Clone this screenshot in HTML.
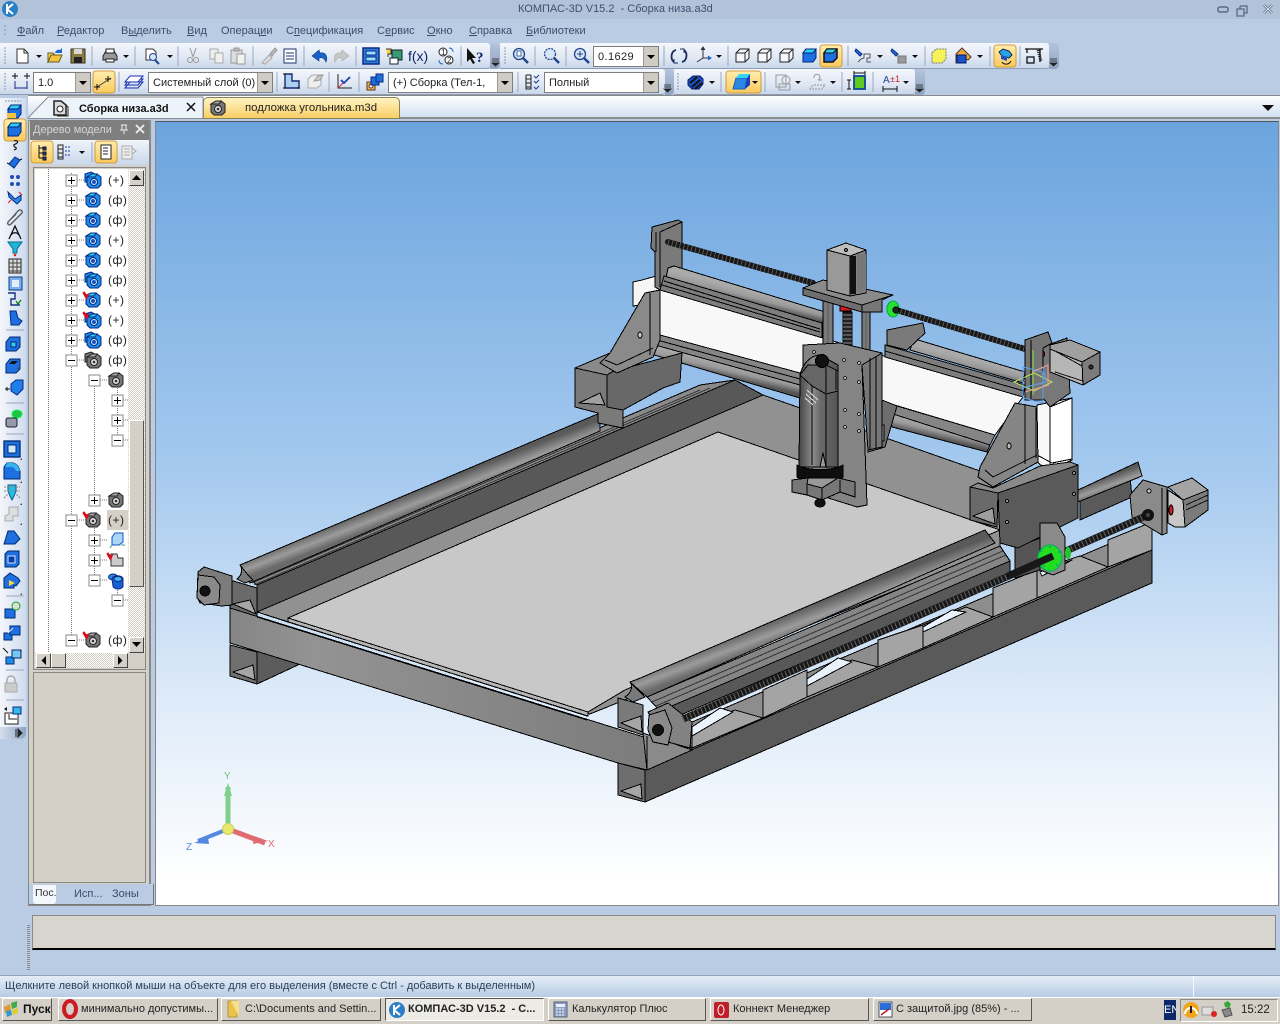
<!DOCTYPE html>
<html><head><meta charset="utf-8"><title>КОМПАС-3D</title>
<style>
html,body{margin:0;padding:0;width:1280px;height:1024px;overflow:hidden;background:#b9cce4;font-family:"Liberation Sans",sans-serif;font-size:11px;color:#222}
div{position:absolute;box-sizing:border-box}
.t{white-space:nowrap;line-height:14px}
.m{top:24px;color:#3d4c6b}
.tb{background:linear-gradient(#f4f7fc,#dfe8f4 60%,#c9d7ea);border-bottom:1px solid #8e9db5;border-radius:0 3px 3px 0}
.h{background:linear-gradient(#b4c4dc,#8fa3c2);border-radius:0 4px 4px 0}
.inp{background:#fff;border:1px solid #7f7f7f;height:21px;line-height:20px;padding-left:4px;white-space:nowrap;font-size:11px}
.dd{position:absolute;right:0;top:0;width:14px;height:19px;background:#cfcbc3;border-left:1px solid #999}
.dd:after{content:"";position:absolute;left:3px;top:8px;border:4px solid transparent;border-top:4px solid #000;border-bottom:0}
.tr{font-size:12px;left:108px;letter-spacing:.5px}
.tk{top:998px;height:23px;background:#d4d0c8;border:1px solid;border-color:#fff #555 #555 #fff;font-size:11px;line-height:21px;white-space:nowrap;overflow:hidden}
</style></head><body>

<!-- title -->
<div style="left:0;top:0;width:1280px;height:19px;background:#b1c2d9"></div>
<div class="t" style="left:518px;top:2px;font-size:11px;color:#3f5070">КОМПАС-3D V15.2&nbsp; - Сборка низа.a3d</div>

<!-- menu -->
<div class="t m" style="left:17px"><u>Ф</u>айл</div>
<div class="t m" style="left:57px"><u>Р</u>едактор</div>
<div class="t m" style="left:121px">В<u>ы</u>делить</div>
<div class="t m" style="left:187px"><u>В</u>ид</div>
<div class="t m" style="left:221px">Операц<u>и</u>и</div>
<div class="t m" style="left:286px">С<u>п</u>ецификация</div>
<div class="t m" style="left:377px">С<u>е</u>рвис</div>
<div class="t m" style="left:427px"><u>О</u>кно</div>
<div class="t m" style="left:469px"><u>С</u>правка</div>
<div class="t m" style="left:526px"><u>Б</u>иблиотеки</div>

<!-- toolbars -->
<div class="tb" style="left:0;top:43px;width:490px;height:26px"></div>
<div class="h" style="left:490px;top:43px;width:10px;height:26px"></div>
<div class="tb" style="left:500px;top:43px;width:549px;height:26px"></div>
<div class="h" style="left:1049px;top:43px;width:10px;height:26px"></div>
<div class="tb" style="left:0;top:69px;width:665px;height:26px"></div>
<div class="h" style="left:665px;top:69px;width:9px;height:26px"></div>
<div class="tb" style="left:674px;top:69px;width:241px;height:26px"></div>
<div class="h" style="left:915px;top:69px;width:10px;height:26px"></div>

<div class="inp" style="left:593px;top:46px;width:66px;letter-spacing:.4px">0.1629<span class="dd"></span></div>
<div class="inp" style="left:33px;top:72px;width:58px">1.0<span class="dd"></span></div>
<div class="inp" style="left:148px;top:72px;width:125px">Системный слой (0)<span class="dd"></span></div>
<div class="inp" style="left:388px;top:72px;width:125px;overflow:hidden">(+) Сборка (Тел-1,<span class="dd"></span></div>
<div class="inp" style="left:544px;top:72px;width:115px">Полный<span class="dd"></span></div>

<!-- tabs -->
<div style="left:28px;top:95px;width:1252px;height:24px;background:linear-gradient(#fff,#d3e0f1);border-top:1px solid #8a8a8a;border-bottom:2px solid #8c8c8c"></div>
<div style="left:203px;top:97px;width:197px;height:22px;background:linear-gradient(#fff3c4,#f9cf65);border:1px solid #8b8158;border-radius:5px 5px 0 0"></div>
<div class="t" style="left:245px;top:101px;font-size:11.4px;color:#222">подложка угольника.m3d</div>

<!-- left panel -->
<div style="left:0;top:98px;width:26px;height:640px;background:linear-gradient(90deg,#f3f6fb,#cfdcef);border-radius:0 0 6px 0"></div>
<div style="left:0;top:727px;width:26px;height:12px;background:linear-gradient(90deg,#d6dfee,#8ea3c4);border-radius:0 0 6px 0"></div>

<div style="left:28px;top:120px;width:123px;height:786px;background:#d4d0c8;border:1px solid #888;border-right:2px solid #888"></div>
<div style="left:30px;top:120px;width:119px;height:20px;background:#7f7f7f"></div>
<div class="t" style="left:33px;top:123px;color:#d6d6d6;font-size:11px">Дерево модели</div>
<div style="left:30px;top:140px;width:119px;height:25px;background:linear-gradient(#f0f4fa,#c9d7ea)"></div>
<div style="left:33px;top:167px;width:113px;height:503px;background:#d4d0c8;border:1px solid #888"></div>
<div style="left:35px;top:169px;width:93px;height:484px;background:#fff"></div>
<div style="left:128px;top:169px;width:17px;height:484px;background:repeating-conic-gradient(#fff 0 25%,#d0ccc4 0 50%) 0 0/2px 2px"></div>
<div style="left:129px;top:420px;width:15px;height:167px;background:#d4d0c8;border:1px solid;border-color:#fff #555 #555 #fff"></div>
<div style="left:35px;top:653px;width:93px;height:15px;background:repeating-conic-gradient(#fff 0 25%,#d0ccc4 0 50%) 0 0/2px 2px"></div>
<div style="left:129px;top:170px;width:15px;height:16px;background:#d4d0c8;border:1px solid;border-color:#fff #444 #444 #fff"></div>
<div style="left:129px;top:637px;width:15px;height:16px;background:#d4d0c8;border:1px solid;border-color:#fff #444 #444 #fff"></div>
<div style="left:36px;top:653px;width:15px;height:15px;background:#d4d0c8;border:1px solid;border-color:#fff #444 #444 #fff"></div>
<div style="left:51px;top:653px;width:15px;height:15px;background:#d4d0c8;border:1px solid;border-color:#fff #444 #444 #fff"></div>
<div style="left:113px;top:653px;width:15px;height:15px;background:#d4d0c8;border:1px solid;border-color:#fff #444 #444 #fff"></div>
<div style="left:33px;top:672px;width:113px;height:211px;background:#d4d0c8;border:1px solid #888"></div>
<div style="left:29px;top:884px;width:125px;height:21px;background:#b9cce4;border-right:1px solid #777;border-bottom:1px solid #777"></div>
<div class="t" style="left:33px;top:885px;width:23px;height:19px;background:#f4f7fc;border-radius:0 0 3px 3px;padding:1px 0 0 2px;font-size:10.5px;color:#333;overflow:hidden">Пос...</div>
<div class="t" style="left:74px;top:887px;color:#3d4c6b">Исп...</div>
<div class="t" style="left:112px;top:887px;color:#3d4c6b">Зоны</div>

<div style="left:107px;top:510px;width:21px;height:20px;background:#d4d0c8"></div>
<div class="t tr" style="top:173px">(+)</div>
<div class="t tr" style="top:193px">(ф)</div>
<div class="t tr" style="top:213px">(ф)</div>
<div class="t tr" style="top:233px">(+)</div>
<div class="t tr" style="top:253px">(ф)</div>
<div class="t tr" style="top:273px">(ф)</div>
<div class="t tr" style="top:293px">(+)</div>
<div class="t tr" style="top:313px">(+)</div>
<div class="t tr" style="top:333px">(ф)</div>
<div class="t tr" style="top:353px">(ф)</div>
<div class="t tr" style="top:513px">(+)</div>
<div class="t tr" style="top:633px">(ф)</div>

<!-- viewport -->
<div style="left:155px;top:121px;width:1124px;height:785px;background:linear-gradient(#6ba4de 0%,#a6caef 45%,#dbe9f8 72%,#fff 97%);border:1px solid #888;border-top:1px solid #555"></div>

<!-- bottom panels -->
<div style="left:32px;top:915px;width:1244px;height:35px;background:#d8d5ce;border:1px solid #8a8a8a;border-bottom:2px solid #000"></div>
<div style="left:27px;top:925px;width:3px;height:45px;background:repeating-linear-gradient(#8a8a8a 0 1px,transparent 1px 2px)"></div>
<div style="left:0;top:975px;width:1280px;height:22px;background:linear-gradient(#e4edf7,#b9cce4);border-top:1px solid #8fa3bf"></div>
<div style="left:1193px;top:976px;width:1px;height:21px;background:#f5f8fc"></div>
<div class="t" style="left:5px;top:979px;font-size:11px;color:#2f3c57">Щелкните левой кнопкой мыши на объекте для его выделения (вместе с Ctrl - добавить к выделенным)</div>

<!-- taskbar -->
<div style="left:0;top:997px;width:1280px;height:27px;background:#d4d0c8;border-top:1px solid #fff"></div>
<div class="tk" style="left:2px;width:50px;padding-left:20px;font-weight:bold;font-size:12px;color:#111">Пуск</div>
<div class="tk" style="left:58px;width:160px;padding-left:22px">минимально допустимы...</div>
<div class="tk" style="left:221px;width:160px;padding-left:23px">C:\Documents and Settin...</div>
<div class="tk" style="left:385px;width:159px;padding-left:22px;font-weight:bold;background:#edebe6;border-color:#555 #fff #fff #555">КОМПАС-3D V15.2&nbsp; - С...</div>
<div class="tk" style="left:548px;width:158px;padding-left:23px">Калькулятор Плюс</div>
<div class="tk" style="left:710px;width:159px;padding-left:22px">Коннект Менеджер</div>
<div class="tk" style="left:873px;width:159px;padding-left:22px">С защитой.jpg (85%) - ...</div>
<div style="left:1180px;top:999px;width:98px;height:23px;border:1px solid;border-color:#888 #fff #fff #888"></div>
<div style="left:1164px;top:1000px;width:12px;height:20px;background:#0c2a6b;color:#fff;font-size:11px;line-height:20px;overflow:hidden">EN</div>
<div class="t" style="left:1241px;top:1003px;font-size:11.5px;color:#222">15:22</div>

<!-- ALL ICONS + MODEL -->
<svg width="1280" height="1024" viewBox="0 0 1280 1024" style="position:absolute;left:0;top:0" xmlns="http://www.w3.org/2000/svg">
<defs>
<linearGradient id="rr" gradientUnits="userSpaceOnUse" x1="800" y1="609" x2="808" y2="630"><stop offset="0" stop-color="#5a5a5a"/><stop offset=".6" stop-color="#9c9c9c"/><stop offset="1" stop-color="#6a6a6a"/></linearGradient>
<linearGradient id="rl" gradientUnits="userSpaceOnUse" x1="400" y1="497" x2="407" y2="515"><stop offset="0" stop-color="#5a5a5a"/><stop offset=".6" stop-color="#9c9c9c"/><stop offset="1" stop-color="#6a6a6a"/></linearGradient>
<linearGradient id="rf" gradientUnits="userSpaceOnUse" x1="1110" y1="476" x2="1115" y2="490"><stop offset="0" stop-color="#5a5a5a"/><stop offset=".6" stop-color="#9c9c9c"/><stop offset="1" stop-color="#6a6a6a"/></linearGradient>
<linearGradient id="r1" gradientUnits="userSpaceOnUse" x1="750" y1="291" x2="747" y2="303"><stop offset="0" stop-color="#aaa"/><stop offset=".5" stop-color="#999"/><stop offset="1" stop-color="#555"/></linearGradient>
<linearGradient id="r2" gradientUnits="userSpaceOnUse" x1="970" y1="359" x2="967" y2="371"><stop offset="0" stop-color="#aaa"/><stop offset=".5" stop-color="#999"/><stop offset="1" stop-color="#555"/></linearGradient>
<linearGradient id="r3" gradientUnits="userSpaceOnUse" x1="725" y1="363" x2="722" y2="376"><stop offset="0" stop-color="#aaa"/><stop offset=".5" stop-color="#999"/><stop offset="1" stop-color="#555"/></linearGradient>
<linearGradient id="r4" gradientUnits="userSpaceOnUse" x1="940" y1="425" x2="937" y2="438"><stop offset="0" stop-color="#aaa"/><stop offset=".5" stop-color="#999"/><stop offset="1" stop-color="#555"/></linearGradient>
<linearGradient id="beam" x1="0" y1="0" x2="1" y2="0"><stop offset="0" stop-color="#858585"/><stop offset=".2" stop-color="#939393"/><stop offset="1" stop-color="#7c7c7c"/></linearGradient>
<linearGradient id="sel" x1="0" y1="0" x2="0" y2="1"><stop offset="0" stop-color="#ffeeb0"/><stop offset="1" stop-color="#fbc95c"/></linearGradient>
<linearGradient id="sp" x1="0" y1="0" x2="1" y2="0"><stop offset="0" stop-color="#444"/><stop offset=".35" stop-color="#8c8c8c"/><stop offset=".55" stop-color="#6a6a6a"/><stop offset="1" stop-color="#555"/></linearGradient>

<g id="ar"><path d="M-3 -1h6l-3 3z" fill="#111"/></g>
<g id="sl"><rect x="-11" y="-11" width="22" height="22" rx="3" fill="url(#sel)" stroke="#d19a3a"/></g>
<g id="pl"><rect x="-5.500" y="-5.500" width="11" height="11" fill="#fff" stroke="#8a8a8a"/><path d="M-3.500 0h7M0 -3.500v7" stroke="#000" fill="none"/></g>
<g id="mi"><rect x="-5.500" y="-5.500" width="11" height="11" fill="#fff" stroke="#8a8a8a"/><path d="M-3.500 0h7" stroke="#000" fill="none"/></g>

<g id="pb"><path d="M-7 -4l5 -3 5 0 4 3v8l-3 3h-8l-3 -3z" fill="#1b8ce8" stroke="#06257f"/><path d="M-7 -4l5 -3 5 0 -2 3z" fill="#27d3f0" stroke="#06257f"/><circle cx="0" cy="1" r="3.500" fill="#d5efff" stroke="#06257f"/><circle cx="0" cy="1" r="2" fill="#1a4fc0"/></g>
<g id="pb2"><path d="M-8 -6l6 -2 4 2v8h-10z" fill="#1b8ce8" stroke="#06257f"/><use href="#pb" x="1" y="1"/></g>
<g id="pg"><path d="M-7 -4l5 -3 5 0 4 3v8l-3 3h-8l-3 -3z" fill="#777" stroke="#222"/><path d="M-7 -4l5 -3 5 0 -2 3z" fill="#aaa" stroke="#222"/><circle cx="0" cy="1" r="3.500" fill="#ddd" stroke="#222"/><circle cx="0" cy="1" r="1.300" fill="#333"/></g>
<g id="pg2"><path d="M-8 -6l6 -2 4 2v8h-10z" fill="#777" stroke="#222"/><use href="#pg" x="1" y="1"/></g>
<path id="chk" d="M-7 -8l2.500 3 2 -1 -2 5 -3.500 -6z" fill="#d40f1f" stroke="#d40f1f"/>

<g id="box"><path d="M-7 -3l3 -4h10v9l-3 4h-10z" fill="#1e6fe0" stroke="#00247a"/><path d="M-7 -3l3 -4h10l-3 4z" fill="#31d0f2" stroke="#00247a"/></g>
<g id="wire"><path d="M-7 -3l4 -4h9v9l-4 4h-9zM-7 -3h9v9M2 -3l4 -4" fill="#f4f7fc" stroke="#222"/></g>
</defs>

<!-- Logo -->
<circle cx="10" cy="9" r="8" fill="#2a7fc4"/><path d="M7 4v10M7 9l6 -5M7 9l6 5" stroke="#fff" stroke-width="2" fill="none"/>
<!-- window buttons -->
<rect x="1218" y="7" width="10" height="5" rx="2" fill="none" stroke="#5a6a86" stroke-width="1.500"/>
<path d="M1240 6h7v7h-3M1240 6v3M1240 9h4v7h-7v-7z" fill="none" stroke="#5a6a86" stroke-width="1.300"/>
<path d="M1264 5l8 8M1272 5l-8 8" stroke="#5a6a86" stroke-width="2.500"/><path d="M1264 5l8 8M1272 5l-8 8" stroke="#dfe7f1" stroke-width="1"/>
<!-- menu handle -->
<path d="M5 25v12" stroke="#8898b0" stroke-dasharray="2 2"/>

<!-- toolbar row 1 -->
<g stroke="#8a9ab2" stroke-dasharray="2 1"><path d="M5 47v18M5 73v18"/></g>
<g stroke="#9aa8bc"><path d="M92 46v20M135 46v20M178 46v20M253 46v20M304 46v20M356 46v20M461 46v20M535 46v20M566 46v20M664 46v20M728 46v20M848 46v20M925 46v20M990 46v20M1020 46v20"/>
<path d="M119 72v20M277 72v20M329 72v20M359 72v20M518 72v20M721 72v20M765 72v20M842 72v20M873 72v20"/></g>
<path d="M505 47v18" stroke="#8a9ab2" stroke-dasharray="2 1"/><path d="M678 73v18" stroke="#8a9ab2" stroke-dasharray="2 1"/>

<g transform="translate(22,56)"><path d="M-5 -7h7l4 4v10h-11z" fill="#fff" stroke="#333"/><path d="M2 -7v4h4" fill="none" stroke="#333"/></g>
<use href="#ar" x="39" y="56"/>
<g transform="translate(55,56)"><path d="M-7 6v-9h5l2 2h5v2h-9z" fill="#f6d25c" stroke="#6b5a1e"/><path d="M-7 6l3 -7h11l-3 7z" fill="#f2c440" stroke="#6b5a1e"/><path d="M0 -3c1 -3 3 -4 5 -3l2 -2v5h-4" fill="#1c67d4"/></g>
<g transform="translate(78,56)"><rect x="-7" y="-7" width="14" height="14" fill="#8a7a3c" stroke="#332"/><rect x="-4" y="-7" width="8" height="5" fill="#d8d8d8"/><rect x="-4" y="1" width="8" height="6" fill="#222"/></g>
<g transform="translate(110,56)"><path d="M-7 0l3 -5h8l3 5v4h-14z" fill="#999" stroke="#222"/><rect x="-4" y="-7" width="8" height="4" fill="#fff" stroke="#222"/><rect x="-4" y="3" width="8" height="3" fill="#fff" stroke="#222"/></g>
<use href="#ar" x="126" y="56"/>
<g transform="translate(152,56)"><path d="M-6 -7h7l3 3v8h-10z" fill="#fff" stroke="#333"/><circle cx="1" cy="1" r="3.500" fill="#d4e4f7" stroke="#22449a"/><path d="M3 4l4 4" stroke="#22449a" stroke-width="2"/></g>
<use href="#ar" x="170" y="56"/>
<g transform="translate(193,56)" fill="none" stroke="#999"><path d="M-3 -8l3 9M3 -8l-3 9"/><circle cx="-3" cy="4" r="2.500"/><circle cx="3" cy="4" r="2.500"/></g>
<g transform="translate(217,56)" fill="#efefef" stroke="#aaa"><path d="M-7 -7h8v10h-8z"/><path d="M-2 -3h8v10h-8z"/></g>
<g transform="translate(238,56)" fill="#ddd" stroke="#999"><rect x="-7" y="-6" width="11" height="13"/><rect x="-1" y="-2" width="8" height="10" fill="#f2f2f2"/><rect x="-4" y="-8" width="5" height="3" fill="#bbb"/></g>
<g transform="translate(269,56)"><path d="M-7 7l7 -8 3 3 -7 6z" fill="#ddd" stroke="#aaa"/><path d="M1 -2l5 -6 2 2 -5 6z" fill="#bbb" stroke="#999"/></g>
<g transform="translate(290,56)"><rect x="-6" y="-7" width="12" height="14" fill="#fff" stroke="#1c2f6e"/><path d="M-4 -3h8M-4 0h8M-4 3h8" stroke="#1c2f6e"/></g>
<path d="M326 62c2 -5 0 -10 -6 -9l-1 -3 -7 6 7 5v-3c3 -1 5 0 7 4z" fill="#1a62c6" stroke="#0b3a86" stroke-width=".6" transform="translate(0,0)"/>
<path d="M335 62c-2 -5 0 -10 6 -9l1 -3 7 6 -7 5v-3c-3 -1 -5 0 -7 4z" fill="#c8c8c8" stroke="#aaa" stroke-width=".6"/>
<g transform="translate(371,56)"><rect x="-8" y="-8" width="16" height="16" fill="#2a7fe0" stroke="#0a2a80" stroke-width="1.500"/><rect x="-5" y="-5" width="10" height="4" fill="#9fdcff" stroke="#0a2a80"/><rect x="-5" y="1" width="10" height="4" fill="#9fdcff" stroke="#0a2a80"/></g>
<g transform="translate(394,56)"><rect x="-2" y="-6" width="10" height="10" fill="#3a9a70" stroke="#123"/><rect x="-4" y="2" width="8" height="6" fill="#fff" stroke="#123"/><path d="M-8 -7h5v5h-3v3" fill="#f7d73c" stroke="#333"/></g>
<text x="408" y="61" font-family="Liberation Sans" font-size="14" fill="#11246b">f(x)</text>
<g transform="translate(446,56)" font-family="Liberation Sans" font-size="8" fill="#222"><circle cx="-3" cy="-4" r="4" fill="#fff" stroke="#222"/><circle cx="3" cy="4" r="4" fill="#fff" stroke="#222"/><text x="-5" y="-1">1</text><text x="1" y="7">2</text><path d="M3 -8c3 0 4 2 4 4M-3 8c-3 0 -4 -2 -4 -4" stroke="#1c67d4" fill="none"/></g>
<g transform="translate(472,56)"><path d="M-5 -8v14l3 -3 3 5 2 -1 -3 -5h4z" fill="#111"/></g>
<text x="476" y="62" font-family="Liberation Serif" font-weight="bold" font-size="15" fill="#11246b">?</text>
<path d="M492 59h7M492 61h7M492 63l3.500 3 3.500 -3z" stroke="#222" fill="#222" stroke-width=".8"/>
<path d="M1050 59h7M1050 61h7M1050 63l3.500 3 3.500 -3z" stroke="#222" fill="#222" stroke-width=".8"/>
<path d="M664 85h7M664 87h7M664 89l3.500 3 3.500 -3z" stroke="#222" fill="#222" stroke-width=".8"/>
<path d="M916 85h7M916 87h7M916 89l3.500 3 3.500 -3z" stroke="#222" fill="#222" stroke-width=".8"/>

<g fill="#d6e6f7" stroke="#22448a"><circle cx="519" cy="54" r="5.500" stroke-width="1.300"/><circle cx="550" cy="54" r="5.500" stroke-width="1.300" stroke-dasharray="2 1"/><circle cx="580" cy="54" r="5.500" stroke-width="1.300"/></g>
<g stroke="#22448a" stroke-width="2.500"><path d="M523 58l5 5M554 58l5 5M584 58l5 5"/></g>
<path d="M577 54h6M580 51v6" stroke="#22448a"/><rect x="517" y="51" width="4" height="5" fill="#fff" stroke="#22448a" stroke-width=".8"/>

<g fill="none" stroke="#1a2a5e" stroke-width="1.800"><path d="M676 50c-5 1 -6 9 -2 12M682 62c5 -1 6 -9 2 -12"/><path d="M674 59v4h4M684 53v-4h-4" stroke-width="1"/></g>
<g transform="translate(703,56)" fill="none" stroke="#333"><path d="M0 -8v10l-6 4M0 2h7" /><path d="M-2 -6l2 -3 2 3" fill="#333"/><path d="M5 0l3 2 -3 2" fill="#1c67d4" stroke="#1c67d4"/></g>
<use href="#ar" x="719" y="56"/>
<use href="#wire" x="743" y="56"/><use href="#wire" x="765" y="56"/><use href="#wire" x="787" y="56"/>
<use href="#box" x="810" y="56"/><use href="#sl" x="831" y="56"/><g transform="translate(831,56)"><path d="M-7 -3l3 -4h10v9l-4 4h-9z" fill="#1e6fe0" stroke="#111" stroke-width="1.500"/><path d="M-7 -3l3 -4h10l-4 4z" fill="#31d0f2" stroke="#111"/></g>
<g transform="translate(864,56)"><path d="M-8 -7l6 5 -2 2 -5 -5z" fill="#1e6fe0" stroke="#0a2a80"/><path d="M-3 3l3 -1v-4h6v4h-3v4h4M-6 6l3 -3" fill="none" stroke="#555"/></g><use href="#ar" x="880" y="56"/>
<g transform="translate(900,56)"><path d="M-8 -7l6 5 -2 2 -5 -5z" fill="#1e6fe0" stroke="#0a2a80"/><rect x="-2" y="0" width="8" height="7" fill="#999" stroke="#777"/></g><use href="#ar" x="915" y="56"/>
<g transform="translate(939,56)"><path d="M-7 -3l4 -4h10v10l-4 4h-10z" fill="#f6f25a" stroke="#777" stroke-dasharray="2 1"/></g>
<g transform="translate(963,56)"><path d="M-7 -2l6 -6 6 6 3 3 -3 3 -2 -1v4h-10z" fill="#f1a83a" stroke="#533"/><rect x="-6" y="-1" width="9" height="8" fill="#1a50c8" stroke="#001a66"/></g><use href="#ar" x="980" y="56"/>
<use href="#sl" x="1005" y="56"/><g transform="translate(1005,56)"><path d="M-6 -4l4 -3 6 2 3 4 -3 3 -7 -2z" fill="#29a4ec" stroke="#123"/><path d="M-4 -1l6 2v4l-6 -2z" fill="#1e50c0"/><path d="M-3 6c2 3 7 3 9 -1" fill="none" stroke="#111"/></g>
<g transform="translate(1034,56)" fill="none" stroke="#111" stroke-width="1.300"><path d="M-9 -7h18M-7 -7v4M6 -7v13"/><rect x="-7" y="1" width="7" height="6"/><path d="M4 -6l3 11" stroke-dasharray="1 1" stroke-width="3"/></g>

<!-- toolbar row 2 -->
<g transform="translate(21,82)" fill="none" stroke="#1a2a8a"><path d="M-6 -1v8M6 -1v8M-6 6h12" /><path d="M-9 -6h6M-6 -9v6M3 -6h6M6 -9v6" stroke="#111"/></g>
<use href="#sl" x="104" y="82"/><g transform="translate(104,82)"><path d="M-7 5l14 -9" stroke="#444"/><path d="M-7 2v6M-10 5h6M4 -6v6M1 -3h6" stroke="#111"/></g>
<g transform="translate(134,82)" fill="none" stroke="#1a2fb0"><path d="M-9 3l5 -6h13l-5 6z"/><path d="M-9 6l5 -6h13l-5 6z"/><path d="M-9 0l5 -6h13l-5 6z" fill="#fff"/></g>
<g transform="translate(292,82)"><path d="M-7 -8v14h14v-7h-7v-7z" fill="#a9d0ef" stroke="#1a2a6e" stroke-width="1.400"/><path d="M-9 -8h3M-9 6h3M5 6h3" stroke="#111"/></g>
<g transform="translate(315,82)"><path d="M-7 -3l4 -4h9v10l-4 3h-9z" fill="#eee" stroke="#aaa"/><path d="M-1 -1l4 -5 5 -1 -3 5z" fill="#ccc" stroke="#999"/></g>
<g transform="translate(345,82)" fill="none"><path d="M-7 -8v14h14" stroke="#222"/><path d="M-7 6l6 -6" stroke="#d22"/><path d="M-4 -2l3 3 6 -6" stroke="#1c3fb0" stroke-width="1.800"/></g>
<g transform="translate(375,82)"><rect x="-8" y="0" width="8" height="8" fill="#f2b83f" stroke="#533"/><circle cx="-4" cy="4" r="2" fill="#fff" stroke="#533"/><rect x="-4" y="-5" width="8" height="8" fill="#1d70dc" stroke="#0a2a80"/><rect x="1" y="-8" width="7" height="8" fill="#1d70dc" stroke="#0a2a80"/></g>
<g transform="translate(532,82)" fill="none" stroke="#222"><path d="M-6 -7h5M-6 -3h5M-6 1h5M-6 5h5M-6 -7v14h5v-14"/><path d="M2 -6l2 2 3 -3M2 -1l2 2 3 -3M2 5l2 2 3 -3" stroke="#1a3a90"/></g>
<g transform="translate(695,82)"><path d="M-7 -2l5 -4h7l3 3v5l-4 5h-7l-4 -4z" fill="#1b4fc4" stroke="#001a66"/><path d="M-5 1l7 -6M-3 5l8 -7M0 7l7 -6" stroke="#111" stroke-width="2"/></g><use href="#ar" x="712" y="82"/>
<rect x="726" y="71" width="35" height="22" rx="3" fill="url(#sel)" stroke="#d19a3a"/>
<g transform="translate(740,82)"><path d="M-7 7l3 -11h11l-2 11z" fill="#2a86e0" stroke="#1a60c4"/><path d="M-4 -4l3 -4h11l-3 4z" fill="#37d2f0"/><path d="M7 -4l3 -4v11l-5 4z" fill="#1a3fc0"/></g><use href="#ar" x="755" y="82"/>
<g transform="translate(783,82)" fill="none" stroke="#9a9a9a"><rect x="-7" y="-7" width="10" height="12"/><circle cx="3" cy="-2" r="4"/><rect x="-4" y="2" width="11" height="6"/></g><use href="#ar" x="798" y="82"/>
<g transform="translate(817,82)" fill="none" stroke="#9a9a9a"><path d="M-7 7l3 -4h12l-3 4z" stroke-dasharray="2 1"/><path d="M-3 -4a3 3 0 1 1 4 2h4"/></g><use href="#ar" x="833" y="82"/>
<g transform="translate(858,82)"><rect x="-4" y="-6" width="11" height="13" fill="#5ec91e" stroke="#11469a" stroke-width="1.800"/><path d="M-9 -2v9M-11 -2h4M-11 7h4M-4 -9h11M-4 -11v4M7 -11v4" stroke="#111" fill="none"/></g>
<g transform="translate(891,82)"><path d="M-8 7h14M-8 4v6M6 4v6" stroke="#111" fill="none"/><text x="-8" y="1" font-family="Liberation Sans" font-size="10" fill="#22449a">A</text><text x="-1" y="0" font-family="Liberation Sans" font-size="9" fill="#c22">±1</text></g><use href="#ar" x="906" y="82"/>

<!-- tab icons -->
<path d="M28 118L48 97H203V118" fill="#edf3fa" stroke="#8a8a8a"/>
<g transform="translate(60,108)"><path d="M-6 -7h7l5 4v10h-12z" fill="#ddd" stroke="#222" stroke-width="1.500"/><circle cx="0" cy="1" r="3" fill="#fff" stroke="#222"/><path d="M6 -3l2 2v9h-11" fill="none" stroke="#222"/></g>
<path d="M187 103l8 8M195 103l-8 8" stroke="#111" stroke-width="1.500"/>
<text x="79" y="112" font-family="Liberation Sans" font-weight="bold" font-size="11" fill="#111">Сборка низа.a3d</text>
<use href="#pg" x="218" y="108"/>
<path d="M1262 105h12l-6 6z" fill="#111"/>

<!-- panel title + tools -->
<g transform="translate(124,129)" stroke="#eee" fill="none"><path d="M-3 -4h6M-2 -4v5M2 -4v5M-4 1h8M0 1v4"/></g>
<path d="M136 125l8 8M144 125l-8 8" stroke="#eee" stroke-width="1.800"/>
<use href="#sl" x="42" y="152"/><g transform="translate(42,152)" fill="none" stroke="#111"><path d="M-3 -7v13M-3 -4h5M-3 1h5M-3 6h5"/><rect x="1" y="-5" width="3" height="3" fill="#1c3fb0"/><rect x="1" y="0" width="3" height="3" fill="#1c3fb0"/><rect x="1" y="5" width="3" height="3" fill="#1c3fb0"/></g>
<g transform="translate(65,152)" fill="none" stroke="#222"><path d="M-7 -7h5v14h-5zM-7 -3h5M-7 1h5M-7 5h5"/><path d="M0 -5h6M0 -1h6M0 3h6" stroke="#1c3fb0" stroke-dasharray="2 1"/></g><use href="#ar" x="82" y="152"/>
<path d="M92 142v20" stroke="#9aa8bc"/>
<use href="#sl" x="106" y="152"/><g transform="translate(106,152)"><rect x="-5" y="-7" width="10" height="14" fill="#fff" stroke="#222"/><path d="M-3 -4h5M-3 -1h5M-3 2h5" stroke="#222"/></g>
<g transform="translate(129,152)" stroke="#aaa" fill="#eee"><rect x="-7" y="-6" width="10" height="13"/><path d="M-5 -3h6M-5 0h6M-5 3h6" fill="none"/><path d="M3 -4l4 3 -4 3z"/></g>

<!-- tree lines -->
<g stroke="#777" stroke-dasharray="1 1" fill="none">
<path d="M48.500 169v484M71.500 173v347M71.500 520v120M94.500 386v114M94.500 526v55M117.500 586v14M117.500 386v55"/>
<path d="M77 180h8M77 200h8M77 220h8M77 240h8M77 260h8M77 280h8M77 300h8M77 320h8M77 340h8M77 360h8M100 380h8M123 400h5M123 420h5M123 440h5M100 500h8M77 520h8M100 540h8M100 560h8M100 580h8M123 600h5M77 640h8"/>
</g>
<g>
<use href="#pl" x="71.500" y="180.500"/><use href="#pl" x="71.500" y="200.500"/><use href="#pl" x="71.500" y="220.500"/><use href="#pl" x="71.500" y="240.500"/><use href="#pl" x="71.500" y="260.500"/><use href="#pl" x="71.500" y="280.500"/><use href="#pl" x="71.500" y="300.500"/><use href="#pl" x="71.500" y="320.500"/><use href="#pl" x="71.500" y="340.500"/><use href="#mi" x="71.500" y="360.500"/>
<use href="#mi" x="94.500" y="380.500"/><use href="#pl" x="117.500" y="400.500"/><use href="#pl" x="117.500" y="420.500"/><use href="#mi" x="117.500" y="440.500"/>
<use href="#pl" x="94.500" y="500.500"/><use href="#mi" x="71.500" y="520.500"/><use href="#pl" x="94.500" y="540.500"/><use href="#pl" x="94.500" y="560.500"/><use href="#mi" x="94.500" y="580.500"/><use href="#mi" x="117.500" y="600.500"/><use href="#mi" x="71.500" y="640.500"/>
<use href="#pb2" x="93" y="180"/><use href="#pb" x="93" y="200"/><use href="#pb" x="93" y="220"/><use href="#pb" x="93" y="240"/><use href="#pb" x="93" y="260"/><use href="#pb2" x="93" y="280"/>
<use href="#pb" x="93" y="300"/><use href="#chk" x="91" y="300"/><use href="#pb2" x="93" y="320"/><use href="#chk" x="91" y="320"/><use href="#pb2" x="93" y="340"/><use href="#pg2" x="93" y="360"/><use href="#pg" x="116" y="380"/><use href="#pg" x="116" y="500"/>
<use href="#pg" x="93" y="520"/><use href="#chk" x="91" y="520"/><use href="#pg" x="93" y="640"/><use href="#chk" x="91" y="640"/>
<g transform="translate(117,540)"><path d="M-5 -3l3 -4h8v9l-4 3h-7z" fill="#a9d6f5" stroke="#1a4fc4"/><path d="M-5 5l-2 3M4 5h4" stroke="#2a9" /></g>
<g transform="translate(116,560)"><path d="M-5 -6h6l1 4h5v8h-12z" fill="#ccc" stroke="#333"/><use href="#chk" x="-1" y="1"/></g>
<g transform="translate(116,580)"><ellipse cx="-3" cy="-3" rx="4.500" ry="3" fill="#2a8ce8" stroke="#0a2a80"/><path d="M-4 -1a5 3 0 0 1 11 0v7a5 3 0 0 1 -10 0z" fill="#1b60d0" stroke="#0a2a80"/><ellipse cx="2" cy="-1" rx="4" ry="2.500" fill="#3cb2f0" stroke="#0a2a80"/></g>
</g>
<path d="M132 180h9l-4.500 -5z" fill="#000"/><path d="M132 642h9l-4.500 5z" fill="#000"/><path d="M46 656v9l-4.500 -4.500z" fill="#000"/><path d="M118 656v9l4.500 -4.500z" fill="#000"/>

<!-- left vertical toolbar -->
<path d="M5 101h16" stroke="#8a9ab2" stroke-dasharray="2 1"/>
<use href="#box" x="15" y="112"/><rect x="7" y="113" width="9" height="5" fill="#f2c23f"/>
<use href="#sl" x="15" y="130"/><use href="#box" x="15" y="130"/>
<path d="M14 141c2 -1 5 0 3 2s-4 1 -3 3 3 1 2 3l-2 1" fill="none" stroke="#111" stroke-width="1.200"/>
<g transform="translate(15,163)"><path d="M-6 1l6 -7 5 3 -6 8z" fill="#1e6fe0" stroke="#0a2a80"/><path d="M-6 1l-2 -1M5 -3l2 -1" stroke="#111"/></g>
<g fill="#1e4fb0"><circle cx="12" cy="177" r="2"/><circle cx="18" cy="177" r="2"/><circle cx="12" cy="184" r="2"/><circle cx="18" cy="184" r="2"/></g>
<g transform="translate(15,198)"><path d="M-7 -6l7 7 6 -4v5l-4 4 -8 -7z" fill="#2a8ae8" stroke="#0a2a80"/><path d="M-4 2l-3 3M4 -6l3 3" stroke="#d22"/></g>
<path d="M10 220l8 -9c3 -3 6 1 3 3l-10 10c-2 2 -4 0 -3 -2l8 -8" fill="none" stroke="#555" stroke-width="1.300"/>
<path d="M9 239l6 -13 6 13M11 235c2 -3 6 -3 8 0" fill="none" stroke="#111" stroke-width="1.300"/>
<g transform="translate(15,248)"><path d="M-7 -6h14l-5 7v4h-4v-4z" fill="#1fb6d8" stroke="#0a6a90"/><circle cx="0" cy="7" r="1.300" fill="#d22"/></g>
<g transform="translate(15,266)"><rect x="-6" y="-7" width="12" height="14" fill="#ddd" stroke="#222"/><path d="M-6 -3h12M-6 1h12M-6 5h12M-2 -7v14M2 -7v14" stroke="#444"/></g>
<rect x="9" y="277" width="13" height="13" fill="#7bb0ee" stroke="#123a80"/><rect x="12" y="280" width="7" height="7" fill="#e2effb"/>
<g transform="translate(15,300)" stroke="#13327e" fill="none" stroke-width="1.400"><path d="M-7 -7h7v6h-4v6h9"/><path d="M1 1l2 3 3 -4" stroke="#1c7f1c"/></g>
<g transform="translate(15,318)"><path d="M-5 -7h6l2 7 4 3 -3 4h-8z" fill="#1e6fe0" stroke="#0a2a80"/></g>
<path d="M6 330h18M6 403h18M6 434h18M6 596h18M6 670h18M6 700h18" stroke="#9aa8bc"/>
<g transform="translate(14,345)"><path d="M-8 -3l4 -5h10v10l-4 4h-10z" fill="#1e6fe0" stroke="#002a6e"/><path d="M-3 -3h5v5h-5z" fill="#34cdf0" stroke="#002a6e"/></g>
<g transform="translate(14,367)"><path d="M-8 -3l4 -5h10v10l-4 4h-10z" fill="#1e6fe0" stroke="#002a6e"/><path d="M-5 -3l3 -3h6l-3 3z" fill="#111"/></g>
<g transform="translate(14,388)"><path d="M-3 -4l5 -4h7v9l-6 6 -6 -4z" fill="#1e7fe8" stroke="#0a2a80"/><path d="M-9 1h5M-7 -1v4" stroke="#111"/></g>
<g transform="translate(14,419)"><ellipse cx="3" cy="-5" rx="5" ry="4" fill="#25c046" stroke="#0f4"/><rect x="-8" y="-1" width="11" height="9" rx="2" fill="#99a" stroke="#123"/></g>
<g transform="translate(12,449)"><rect x="-8" y="-8" width="16" height="16" fill="#1e6fe0" stroke="#002a6e" stroke-width="1.300"/><rect x="-4" y="-4" width="8" height="8" fill="#cfe8fa" stroke="#002a6e"/></g>
<g transform="translate(12,471)"><path d="M-8 8v-12l3 -4h6c4 1 6 4 7 8v8z" fill="#1e6fe0" stroke="#002a6e"/><path d="M-5 -8h6c4 1 6 4 7 8h-4c-1 -3 -3 -4 -5 -4h-6z" fill="#35b4ee"/></g>
<g transform="translate(12,493)"><path d="M-4 -8h8v6l-2 5 -2 4 -2 -4 -2 -5z" fill="#27bfe5" stroke="#0a5a90"/><path d="M-8 -6h16M-8 -2h16M-8 5l4 -4M8 5l-4 -4" stroke="#888" stroke-dasharray="2 1"/></g>
<g transform="translate(12,514)" fill="#ddd" stroke="#aaa"><path d="M-7 7v-5l4 -2v-7h9v9h-5v5z"/></g>
<g transform="translate(12,537)"><path d="M-8 7l4 -13h6l6 8 -5 5z" fill="#1e6fe0" stroke="#002a6e"/></g>
<g transform="translate(12,559)"><path d="M-7 -5l3 -3h11v13l-3 3h-11z" fill="#1e6fe0" stroke="#002a6e"/><rect x="-4" y="-3" width="7" height="7" fill="#0d3ca8" stroke="#cfe8fa"/></g>
<g transform="translate(12,581)"><path d="M-8 -3l6 -5 8 5 2 3 -4 5 -2 -1v3h-10z" fill="#1e6fe0" stroke="#002a6e"/><path d="M-3 -1l6 3 -6 3z" fill="#f7d73c"/></g>
<g transform="translate(12,611)"><rect x="-7" y="-2" width="10" height="9" fill="#1e6fe0" stroke="#002a6e"/><circle cx="4" cy="-5" r="4" fill="#ddd" stroke="#1a1"/></g>
<g transform="translate(12,633)"><rect x="-8" y="0" width="8" height="7" fill="#1e6fe0" stroke="#002a6e"/><rect x="-2" y="-7" width="10" height="9" fill="#1e6fe0" stroke="#002a6e"/><path d="M-4 0l5 -5" stroke="#d9eaff"/></g>
<g transform="translate(12,656)"><rect x="-6" y="1" width="8" height="7" fill="#1e8ae8" stroke="#002a6e"/><rect x="0" y="-6" width="9" height="8" fill="#78c4f0" stroke="#002a6e"/><path d="M-9 -8l5 5" stroke="#111"/></g>
<g transform="translate(11,685)"><rect x="-6" y="-2" width="12" height="9" fill="#ccc" stroke="#aaa"/><path d="M-4 -2v-3a4 4 0 0 1 8 0v3" fill="none" stroke="#aaa" stroke-width="1.500"/></g>
<g transform="translate(12,715)"><rect x="-7" y="-2" width="13" height="11" fill="#fff" stroke="#222"/><path d="M-3 -1v5h8" stroke="#222" fill="none"/><rect x="1" y="-8" width="8" height="7" fill="#31b8ee" stroke="#0a2a80"/><path d="M-8 -6l3 -2v4z" fill="#111"/></g>
<path d="M16 729v8M18 729l4 4 -4 4z" fill="#222" stroke="#222"/>
<g fill="#444"><path d="M20 650l2 2h-2zM20 366v3l-3 0zM20 595l2 -2v2zM20 525l2 -2v2zM20 460l2 -2v2zM20 483l2 -2v2zM20 505l2 -2v2z"/></g>

<!-- taskbar icons -->
<g transform="translate(11,1009)"><path d="M-7 -2l6 -3 1 6 -6 3z" fill="#d93"/><path d="M0 -6l6 -2 0 6 -5 2z" fill="#4a4"/><path d="M-5 2l5 -1 1 5 -5 2z" fill="#39c"/><path d="M1 1l6 -2v5l-5 2z" fill="#dc3"/></g>
<ellipse cx="70" cy="1009" rx="6" ry="8" fill="none" stroke="#cc1b22" stroke-width="4"/>
<rect x="228" y="1001" width="9" height="16" fill="#ecc14c" stroke="#b4933a"/><path d="M231 1001h8v16" fill="#f7e08c"/>
<circle cx="397" cy="1010" r="8" fill="#2c7ec6"/><path d="M394 1005v10M394 1010l6 -5M394 1010l6 5" stroke="#fff" stroke-width="2" fill="none"/>
<rect x="554" y="1002" width="13" height="15" fill="#8a9fc4" stroke="#567"/><rect x="556" y="1004" width="9" height="3" fill="#eef"/><path d="M556 1009h9M556 1012h9M556 1015h9" stroke="#fff" stroke-dasharray="2 1"/>
<rect x="714" y="1002" width="15" height="16" rx="2" fill="#c01f2a"/><ellipse cx="721" cy="1010" rx="3" ry="5" fill="none" stroke="#fff"/>
<path d="M879 1002h13v15h-13z" fill="#fff" stroke="#456"/><path d="M880 1003h11v7h-11z" fill="#2d6dd8"/><path d="M881 1015l8 -6" stroke="#b22" stroke-width="1.500"/>
<circle cx="1191" cy="1010" r="8" fill="#f2a51a"/><path d="M1185 1014a6 6 0 0 1 12 0" fill="none" stroke="#fff" stroke-width="2"/><path d="M1191 1006v7" stroke="#222" stroke-width="2"/>
<rect x="1202" y="1007" width="11" height="8" fill="#ddd" stroke="#999"/><circle cx="1214" cy="1014" r="3" fill="#d22"/>
<path d="M1224 1003l4 -2 3 3 -2 4 -4 -1z" fill="#3a3"/><path d="M1222 1010l8 -2 2 7 -7 2z" fill="#888" stroke="#555"/>

<!-- ==== 3D MODEL ==== -->
<g stroke="#000" stroke-width="1" stroke-linejoin="round" shape-rendering="crispEdges">
<!-- left lower tube -->
<polygon fill="#5c5c5c" points="257,650 300,664 270,678 257,684"/>
<polygon fill="#707070" points="230,645 257,652 257,684 230,676"/>
<polygon fill="#a6a6a6" points="233,672 253,665 255,680"/>

<!-- right trough -->
<polygon fill="#8d8d8d" points="685,725 1130,535 1150,555 692,752"/>
<g fill="#a4a4a4"><polygon points="692,748 763,718 735,710 692,727"/><polygon points="763,718 807,697 807,670 763,690"/><polygon points="807,697 878,667 852,660 807,680"/><polygon points="878,667 923,648 923,625 878,640"/><polygon points="923,648 993,617 966,607 923,625"/><polygon points="993,617 1037,598 1037,570 993,588"/><polygon points="1037,598 1108,567 1080,556 1037,570"/><polygon points="1108,567 1152,550 1152,522 1108,540"/></g>
<polygon fill="#eaf2fb" points="692,727 720,708 733,712 692,736"/>
<polygon fill="#eaf2fb" points="807,679 838,658 852,662 807,686"/>
<polygon fill="#eaf2fb" points="923,627 952,610 966,612 923,632"/>
<polygon fill="#eaf2fb" points="1040,572 1055,566 1072,560 1042,576"/>

<!-- base + plate -->
<polygon fill="#919191" points="257,612 763,395 1000,478 1000,548 590,714 288,622"/>
<polygon fill="#c8c8c8" points="288,618 718,432 1000,530 625,690 588,712"/>
<polygon fill="#b6b6b6" points="288,618 588,712 588,716 288,622"/>

<!-- left rail -->
<polygon fill="#585858" points="257,585 735,380 763,395 257,612"/>
<polygon fill="#8a8a8a" points="248,578 700,385 735,380 257,585"/>
<polygon fill="url(#rl)" points="240,565 600,413 600,431 250,583"/>
<path d="M252,583 L700,390M254,585 L710,388" stroke="#333" fill="none"/>
<polygon fill="#6a6a6a" points="230,580 257,588 257,617 230,608"/>
<polygon fill="#a6a6a6" points="233,604 250,600 256,614"/>
<path d="M240,565c3 4 2 10 -3 14l8 4 8 -3 -5 -5z" fill="#7a7a7a"/>
<polygon fill="#7c7c7c" points="198,572 204,567 232,576 232,605 222,606 200,603 197,597"/>
<polygon fill="#8a8a8a" points="198,575 214,577 220,585 219,603 204,605 197,598"/>
<circle cx="205" cy="591" r="5" fill="#111"/>

<!-- front beam -->
<polygon fill="url(#beam)" points="230,608 647,738 647,770 618,763 230,643"/>
<path d="M257,612L587,716M257,617L587,720" fill="none"/>

<!-- right tube + long beam -->
<polygon fill="#6e6e6e" points="618,763 645,770 645,802 618,795"/>
<polygon fill="#a6a6a6" points="621,791 641,784 642,799"/>
<polygon fill="#5a5a5a" points="645,770 1152,550 1152,583 645,802"/>
<polygon fill="#7a7a7a" points="618,698 643,705 643,735 618,727"/>
<polygon fill="#a6a6a6" points="621,723 641,716 642,732"/>
<polygon fill="#8a8a8a" points="643,733 692,750 647,770"/>
<path d="M647 736v33"/>

<!-- right rail -->
<polygon fill="#585858" points="660,711 1010,561 1010,574 683,714"/>
<polygon fill="#858585" points="647,697 1000,546 1010,561 660,711"/>
<path d="M652,702L1003,551M656,706L1006,555" stroke="#333" fill="none"/>
<polygon fill="url(#rr)" points="630,682 638,679 985,530 995,543 647,697"/>
<path d="M630,682c3 4 2 10 -5 15l8 5 12 -5z" fill="#7a7a7a"/>

<!-- front bearing -->
<polygon fill="#828282" points="648,712 668,703 692,722 690,748 668,742"/>
<polygon fill="#8a8a8a" points="649,715 665,710 672,728 668,745 653,742 648,730"/>
<circle cx="658" cy="730" r="5.500" fill="#111"/>

<!-- right far rail -->
<polygon fill="#5a5a5a" points="1080,498 1130,477 1132,497 1080,520"/>
<polygon fill="url(#rf)" points="1078,490 1138,462 1142,476 1078,502"/>

<!-- ===== gantry ===== -->
<polygon fill="#f6f6f6" points="633,282 642,280 660,275 660,300 640,305 633,306"/>
<polygon fill="#7a7a7a" points="652,227 678,220 682,222 682,268 670,272 660,290 655,287 655,252 651,248"/>
<path d="M656 232l0 20M660 232l0 55M682 222L660 232" fill="none"/>

<path d="M668 242L813 283" stroke="#181818" stroke-width="6" stroke-linecap="round" fill="none"/>
<path d="M668 242L813 283" stroke="#555" stroke-width="6" stroke-dasharray="1 3" fill="none"/>

<polygon fill="url(#r1)" points="668,268 674,266 825,312 822,325 666,278"/>
<polygon fill="#7d7d7d" points="664,276 822,323 822,338 660,290"/>
<path d="M664,281L820,329M662,285L820,332" fill="none"/>
<polygon fill="#f8f8f8" points="660,290 1023,397 995,435 660,335"/>
<polygon fill="#858585" points="660,335 800,373 800,385 655,345"/>
<polygon fill="url(#r3)" points="655,345 800,385 800,398 651,354 648,346"/>
<path d="M657,340L800,379" fill="none"/>

<!-- left block -->
<polygon fill="#7a7a7a" points="575,368 607,375 607,407 623,410 623,428 598,423 598,413 575,407"/>
<polygon fill="#a0a0a0" points="579,403 600,393 605,405"/>
<polygon fill="#686868" points="607,373 682,353 680,382 663,388 623,410 607,407"/>
<polygon fill="#8a8a8a" points="575,368 610,353 640,355 607,375"/>
<polygon fill="#8a8a8a" points="610,353 645,293 660,290 660,340 653,357 617,373 600,363"/>
<path d="M660 292v48M650 293v62M605,360L617,365L653,348" fill="none"/>
<ellipse cx="640" cy="335" rx="2" ry="3" fill="#ccc"/>

<!-- far right rods + block behind spindle -->
<polygon fill="url(#r2)" points="913,342 918,340 1025,372 1023,383 910,350"/>
<polygon fill="#7d7d7d" points="885,345 1025,385 1023,397 885,357"/>
<path d="M885,351L1024,391" fill="none"/>
<polygon fill="#858585" points="887,403 995,435 990,445 890,413"/>
<polygon fill="url(#r4)" points="890,413 990,445 987,452 892,427"/>
<polygon fill="#7a7a7a" points="887,330 923,323 925,333 907,350 887,345"/>
<polygon fill="#6e6e6e" points="868,365 882,357 882,400 897,406 885,447 868,452"/>
<rect x="870" y="425" width="14" height="16" fill="#9a9a9a"/>

<path d="M893 309L1025 349" stroke="#181818" stroke-width="6" fill="none"/>
<path d="M893 309L1025 349" stroke="#555" stroke-width="6" stroke-dasharray="1 3" fill="none"/>
<ellipse cx="893" cy="309" rx="6" ry="8" fill="#26e02e" stroke="#0a4"/>
<circle cx="896" cy="310" r="3" fill="#222"/>

<!-- spindle carriage -->
<polygon fill="#7a7a7a" points="823,290 833,290 833,345 823,345"/>
<polygon fill="#7a7a7a" points="862,305 870,305 870,358 862,358"/>
<path d="M828 290v55M866 305v53" stroke="#5a5a5a" fill="none"/>
<rect x="843" y="312" width="9" height="42" fill="#222"/>
<path d="M843 315h9M843 319h9M843 323h9M843 327h9M843 331h9M843 335h9M843 339h9M843 343h9M843 347h9" stroke="#888" fill="none"/>
<rect x="840" y="306" width="11" height="5" fill="#d81c1c"/>
<polygon fill="#8a8a8a" points="803,288 823,280 893,295 880,300 862,312 803,295"/>
<polygon fill="#6f6f6f" points="803,288 862,305 862,312 803,295"/>
<polygon fill="#777" points="862,305 893,295 882,300 882,312 862,312"/>
<polygon fill="#828282" points="827,250 846,243 866,250 866,293 850,296 827,290"/>
<polygon fill="#bebebe" points="827,250 846,243 866,250 850,256"/>
<polygon fill="#999" points="827,250 850,256 850,296 827,290"/>
<rect x="850" y="256" width="6" height="38" fill="#111" stroke="none"/>
<rect x="857" y="254" width="9" height="38" fill="#787878" stroke="none"/>
<circle cx="846" cy="250" r="1.500" fill="#777"/>

<!-- plate -->
<polygon fill="#777" points="862,365 882,353 882,447 868,450"/>
<polygon fill="#848484" points="803,345 840,343 882,353 862,365 867,505 857,507 803,490"/>
<path d="M870 358v92M876 356v92" fill="none"/>
<g fill="#ccc" stroke="#222"><circle cx="814" cy="352" r="1.500"/><circle cx="844" cy="360" r="1.500"/><circle cx="859" cy="363" r="1.500"/><circle cx="845" cy="378" r="1.500"/><circle cx="859" cy="382" r="1.500"/><circle cx="845" cy="410" r="1.500"/><circle cx="859" cy="414" r="1.500"/><circle cx="845" cy="427" r="1.500"/><circle cx="859" cy="431" r="1.500"/></g>

<!-- spindle -->
<path d="M800 375c2 -10 10 -20 20 -20l18 10v102h-39z" fill="url(#sp)"/>
<path d="M812 385v80M826 393v75M800 375l12 10 14 8 12 -3" fill="none"/>
<path d="M800 375l8 -10 18 0 12 6v20l-12 3 -14 -8z" fill="#666"/>
<path d="M826 367v26M836 370v20" fill="none"/>
<circle cx="822" cy="361" r="6.500" fill="#111"/>
<path d="M807 390l11 10M806 394l10 9M805 398l8 7" stroke="#ddd" fill="none"/>
<path d="M797 465c8 6 38 6 46 0v12c-6 8 -40 8 -46 0z" fill="#0e0e0e"/>
<path d="M820 467l3 -14 3 14z" fill="#9a9a9a"/>
<polygon fill="#777" points="792,480 792,492 807,495 822,500 840,492 855,497 855,482 838,478 808,478"/>
<polygon fill="#999" points="808,478 838,478 822,488 807,484"/>
<path d="M807 484v11M822 488v12M840 480v12" fill="none"/>
<ellipse cx="820" cy="503" rx="5" ry="4" fill="#111"/>

<!-- right gantry tower -->
<polygon fill="#f8f8f8" points="1037,405 1072,398 1072,460 1050,472 1037,462"/>
<polygon fill="#fff" points="1050,407 1072,398 1072,460 1050,470"/>
<path d="M1050 407v65M1037 455l15 8 20 -4" fill="none"/>
<polygon fill="#787878" points="1043,347 1067,338 1070,393 1050,407 1043,398"/>
<circle cx="1040" cy="354" r="4.500" fill="#d81c1c" stroke="#000"/>
<polygon fill="#747474" points="1025,340 1048,332 1052,343 1043,348 1043,400 1025,400"/>
<path d="M1031 340v60" fill="none"/>
<polygon fill="#a0a0a0" points="1050,345 1070,340 1100,352 1082,362 1050,349"/>
<polygon fill="#b6b6b6" points="1050,349 1082,362 1083,385 1050,372"/>
<polygon fill="#7c7c7c" points="1082,362 1100,352 1100,375 1083,385"/>
<path d="M1055,351L1082,366M1055,372L1083,381" stroke="#111" fill="none"/>
<circle cx="1091" cy="367" r="2" fill="#333"/>

<polygon fill="#858585" points="980,467 1015,403 1037,407 1038,462 993,487 978,477"/>
<path d="M1025 404v60M1036 408v50M985,470L993,477L1037,455" fill="none"/>
<ellipse cx="1009" cy="446" rx="2" ry="3" fill="#bbb"/>

<polygon fill="#8a8a8a" points="970,487 978,483 993,488 1040,466 1070,462 1078,465 998,493"/>
<polygon fill="#555" points="1015,548 1040,538 1040,570 1015,578"/>
<polygon fill="#5a5a5a" points="998,493 1078,465 1078,518 1018,548 1000,543"/>
<polygon fill="#6a6a6a" points="970,487 998,493 997,527 970,520"/>
<polygon fill="#9d9d9d" points="973,516 993,508 995,524"/>
<g fill="#aaa" stroke="#000"><circle cx="1007" cy="501" r="1.500"/><circle cx="1074" cy="473" r="1.500"/><circle cx="1007" cy="522" r="1.500"/><circle cx="1074" cy="494" r="1.500"/></g>

<!-- right end + motor -->
<polygon fill="#8a8a8a" points="1130,495 1143,480 1167,487 1167,533 1162,535 1132,517"/>
<path d="M1162 488v47" fill="none"/>
<circle cx="1149" cy="491" r="2" fill="#ccc"/>
<polygon fill="#a4a4a4" points="1168,487 1192,478 1208,490 1183,500"/>
<polygon fill="#7c7c7c" points="1183,500 1208,490 1208,510 1185,527"/>
<polygon fill="#c8c8c8" points="1168,490 1183,500 1185,527 1175,527 1168,523"/>
<path d="M1186,505L1208,495M1186,510L1208,500" stroke="#111" fill="none"/>
<ellipse cx="1171" cy="510" rx="2" ry="5" fill="#c22"/>
</g>

<!-- main screw -->
<path d="M683 719L1148 515" stroke="#181818" stroke-width="7" fill="none"/>
<path d="M683 719L1148 515" stroke="#666" stroke-width="6" stroke-dasharray="1 3" fill="none"/>
<circle cx="1148" cy="515" r="6" fill="#111"/>
<circle cx="1148" cy="515" r="2" fill="#444"/>
<!-- ball nut -->
<g stroke="#000" shape-rendering="crispEdges">
<polygon fill="#8a8a8a" points="1040,523 1057,523 1065,537 1065,570 1053,575 1040,570"/>
<ellipse cx="1068" cy="553" rx="3" ry="6" fill="#22c62a" stroke="none"/>
<ellipse cx="1050" cy="558" rx="12" ry="13" fill="#22dd22" stroke="#0a6"/>
</g>
<path d="M1008 576L1053 556" stroke="#181818" stroke-width="7" fill="none"/>
<g fill="#0a6"><circle cx="1041" cy="551" r="1"/><circle cx="1050" cy="547" r="1"/><circle cx="1059" cy="552" r="1"/><circle cx="1057" cy="565" r="1"/><circle cx="1044" cy="566" r="1"/></g>

<!-- axis marker on model -->
<g fill="none" stroke-width="1">
<path d="M1033 350v45" stroke="#7de040"/><path d="M1014 382l20 -9 18 9 -18 9z" stroke="#b7e35a"/>
<path d="M1023 367l20 5v31l-20 -5z" stroke="#5aa0f0"/><path d="M1022 388l24 -6M1046 382l-3 -15" stroke="#5aa0f0"/>
<path d="M1025 392l24 -7 M1032 372l16 -7v20" stroke="#e8a0a0"/>
</g>

<!-- triad -->
<path d="M228 829V787" stroke="#7fd08c" stroke-width="5"/>
<path d="M228 783l-4 13h8z" fill="#7fd08c"/>
<path d="M228 829L265 843" stroke="#e06b70" stroke-width="5"/>
<path d="M268 841l-14 -5 -1 8z" fill="#e06b70"/>
<path d="M228 829L198 841" stroke="#5588e0" stroke-width="4"/>
<path d="M194 843l14 -6 1 7z" fill="#5588e0"/>
<circle cx="228" cy="829" r="5.500" fill="#e8e86c" stroke="#cfd060"/>
<g font-family="Liberation Sans" font-size="10"><text x="224" y="779" fill="#6fc07c">Y</text><text x="268" y="847" fill="#e06b70">X</text><text x="186" y="850" fill="#5588e0">Z</text></g>
</svg>
</body></html>
